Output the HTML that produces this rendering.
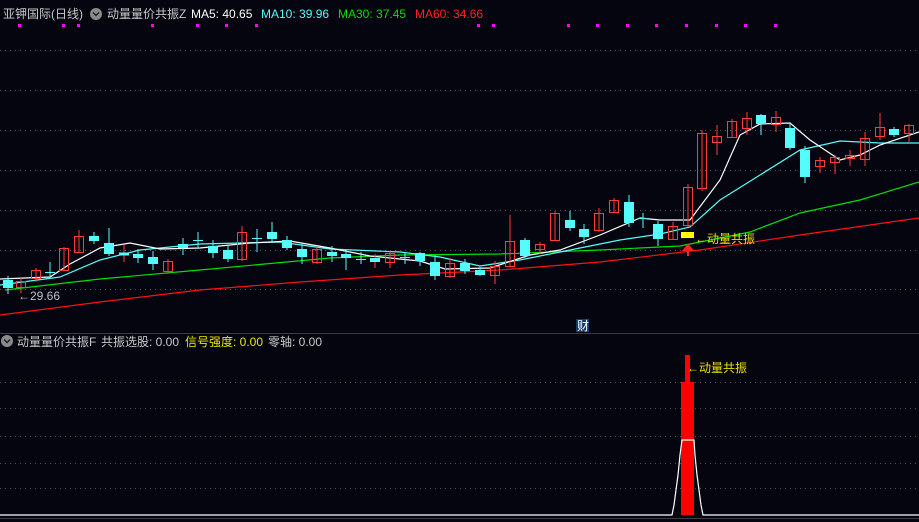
<!DOCTYPE html>
<html><head><meta charset="utf-8"><style>
html,body{margin:0;padding:0;background:#05050f;width:919px;height:522px;overflow:hidden}
svg{display:block}
text{font-family:"Liberation Sans","Noto Sans CJK SC",sans-serif;font-size:12px}
.r{fill:none;stroke:#ff3c3c;stroke-width:1}
.c{fill:#54fcfc;stroke:#54fcfc}
.wr{stroke:#ff3c3c}
.wc{stroke:#54fcfc}
.g{stroke:#555;stroke-dasharray:1 4;stroke-width:1}
</style></head><body>
<svg width="919" height="522" viewBox="0 0 919 522" xmlns="http://www.w3.org/2000/svg">
<rect width="919" height="522" fill="#05050f"/>
<!-- grid -->
<g class="g">
<line x1="0" y1="50.5" x2="919" y2="50.5"/><line x1="0" y1="90.5" x2="919" y2="90.5"/>
<line x1="0" y1="130.5" x2="919" y2="130.5"/><line x1="0" y1="170.5" x2="919" y2="170.5"/>
<line x1="0" y1="210.5" x2="919" y2="210.5"/><line x1="0" y1="250.5" x2="919" y2="250.5"/>
<line x1="0" y1="289.5" x2="919" y2="289.5"/>
<line x1="0" y1="382.5" x2="919" y2="382.5"/><line x1="0" y1="408.5" x2="919" y2="408.5"/>
<line x1="0" y1="436.5" x2="919" y2="436.5"/><line x1="0" y1="463.5" x2="919" y2="463.5"/>
<line x1="0" y1="488.5" x2="919" y2="488.5"/>
</g>
<line x1="0" y1="333.5" x2="919" y2="333.5" stroke="#3a3a44"/>
<!-- header -->
<text x="3" y="18" fill="#c8c8c8">亚钾国际(日线)</text>
<circle cx="96" cy="14" r="6" fill="#8a8a8a"/><path d="M93 12.5l3 3 3-3" stroke="#222" fill="none" stroke-width="1.5"/>
<text x="107" y="18" fill="#c8c8c8">动量量价共振Z</text>
<text x="191" y="18" fill="#ffffff">MA5: 40.65</text>
<text x="261" y="18" fill="#54fcfc">MA10: 39.96</text>
<text x="338" y="18" fill="#00e000">MA30: 37.45</text>
<text x="415" y="18" fill="#ff2020">MA60: 34.66</text>
<g fill="#ff00ff">
<rect x="18" y="24" width="3" height="3"/><rect x="62" y="24" width="3" height="3"/><rect x="77" y="24" width="3" height="3"/>
<rect x="151" y="24" width="3" height="3"/><rect x="196" y="24" width="3" height="3"/><rect x="225" y="24" width="3" height="3"/>
<rect x="255" y="24" width="3" height="3"/><rect x="477" y="24" width="3" height="3"/><rect x="492" y="24" width="3" height="3"/>
<rect x="567" y="24" width="3" height="3"/><rect x="596" y="24" width="3" height="3"/><rect x="626" y="24" width="3" height="3"/>
<rect x="655" y="24" width="3" height="3"/><rect x="685" y="24" width="3" height="3"/><rect x="715" y="24" width="3" height="3"/>
<rect x="744" y="24" width="3" height="3"/><rect x="774" y="24" width="3" height="3"/>
</g>
<!-- MA lines -->
<polyline fill="none" stroke="#ff1010" stroke-width="1.2" points="0,315 100,302 200,290 300,282 400,275 500,270 600,262 700,250 800,235 919,218"/>
<polyline fill="none" stroke="#00e000" stroke-width="1.2" points="5,290 100,279 200,270 330,258 400,255 500,254 600,250 680,246 750,232 800,213 860,200 919,182"/>
<polyline fill="none" stroke="#54fcfc" stroke-width="1.2" points="0,285 60,277 100,260 140,250 200,244 280,242 330,249 400,252 440,257 480,266 520,260 560,252 620,240 660,234 690,227 720,200 760,175 800,150 840,141 880,143 919,143"/>
<polyline fill="none" stroke="#ffffff" stroke-width="1.2" points="0,279 50,277 70,264 100,248 130,243 160,249 200,248 250,243 290,241 330,248 370,256 420,261 445,269 490,268 530,255 560,250 600,235 640,218 660,220 690,220 720,180 740,135 760,124 790,123 810,140 840,160 860,155 880,145 919,132"/>
<!-- candles -->
<g stroke-width="1">
<line class="wc" x1="8" y1="276" x2="8" y2="294"/><rect class="c" x="3.5" y="280.5" width="9" height="7"/>
<line class="wr" x1="21" y1="278" x2="21" y2="293"/><rect class="r" x="16.5" y="281.5" width="9" height="6"/>
<line class="wr" x1="36" y1="268" x2="36" y2="282"/><rect class="r" x="31.5" y="270.5" width="9" height="8"/>
<line class="wc" x1="50" y1="262" x2="50" y2="278"/><line class="wc" x1="45" y1="272.5" x2="55" y2="272.5"/>
<line class="wr" x1="64" y1="247" x2="64" y2="271"/><rect class="r" x="59.5" y="248.5" width="9" height="22"/>
<line class="wr" x1="79" y1="230" x2="79" y2="253"/><rect class="r" x="74.5" y="236.5" width="9" height="16"/>
<line class="wc" x1="94" y1="232" x2="94" y2="244"/><rect class="c" x="89.5" y="236.5" width="9" height="4"/>
<line class="wc" x1="109" y1="228" x2="109" y2="256"/><rect class="c" x="104.5" y="243.5" width="9" height="10"/>
<line class="wr" x1="124" y1="245" x2="124" y2="262"/><rect class="c" x="119.5" y="253" width="9" height="2" fill="#ff3c3c" stroke="#ff3c3c"/>
<line class="wc" x1="138" y1="249" x2="138" y2="263"/><rect class="c" x="133.5" y="254.5" width="9" height="3"/>
<line class="wc" x1="153" y1="251" x2="153" y2="270"/><rect class="c" x="148.5" y="257.5" width="9" height="6"/>
<line class="wr" x1="168" y1="259" x2="168" y2="274"/><rect class="r" x="163.5" y="261.5" width="9" height="10"/>
<line class="wc" x1="183" y1="238" x2="183" y2="255"/><rect class="c" x="178.5" y="244.5" width="9" height="3"/>
<line class="wc" x1="198" y1="232" x2="198" y2="248"/><line class="wc" x1="193" y1="240.5" x2="203" y2="240.5"/>
<line class="wc" x1="213" y1="240" x2="213" y2="258"/><rect class="c" x="208.5" y="246.5" width="9" height="6"/>
<line class="wc" x1="228" y1="246" x2="228" y2="262"/><rect class="c" x="223.5" y="250.5" width="9" height="8"/>
<line class="wr" x1="242" y1="226" x2="242" y2="261"/><rect class="r" x="237.5" y="232.5" width="9" height="27"/>
<line class="wc" x1="257" y1="229" x2="257" y2="252"/><line class="wc" x1="252" y1="238.5" x2="262" y2="238.5"/>
<line class="wc" x1="272" y1="222" x2="272" y2="243"/><rect class="c" x="267.5" y="232.5" width="9" height="6"/>
<line class="wc" x1="287" y1="236" x2="287" y2="250"/><rect class="c" x="282.5" y="240.5" width="9" height="7"/>
<line class="wc" x1="302" y1="244" x2="302" y2="264"/><rect class="c" x="297.5" y="249.5" width="9" height="7"/>
<line class="wr" x1="317" y1="246" x2="317" y2="264"/><rect class="r" x="312.5" y="249.5" width="9" height="13"/>
<line class="wc" x1="332" y1="246" x2="332" y2="262"/><rect class="c" x="327.5" y="252.5" width="9" height="3"/>
<line class="wc" x1="346" y1="250" x2="346" y2="270"/><rect class="c" x="341.5" y="254.5" width="9" height="3"/>
<line class="wc" x1="361" y1="252" x2="361" y2="264"/><line class="wc" x1="356" y1="259.5" x2="366" y2="259.5"/>
<line class="wr" x1="375" y1="254" x2="375" y2="268"/><rect class="c" x="370.5" y="258.5" width="9" height="3" fill="#ff3c3c" stroke="#ff3c3c"/>
<line class="wr" x1="390" y1="251" x2="390" y2="268"/><rect class="r" x="385.5" y="253.5" width="9" height="9"/>
<line class="wc" x1="405" y1="252" x2="405" y2="264"/><line class="wc" x1="400" y1="257.5" x2="410" y2="257.5"/>
<line class="wc" x1="420" y1="252" x2="420" y2="266"/><rect class="c" x="415.5" y="253.5" width="9" height="7"/>
<line class="wc" x1="435" y1="255" x2="435" y2="280"/><rect class="c" x="430.5" y="262.5" width="9" height="13"/>
<line class="wr" x1="450" y1="258" x2="450" y2="278"/><rect class="r" x="445.5" y="263.5" width="9" height="13"/>
<line class="wc" x1="465" y1="259" x2="465" y2="274"/><rect class="c" x="460.5" y="263.5" width="9" height="7"/>
<line class="wc" x1="480" y1="267" x2="480" y2="276"/><rect class="c" x="475.5" y="270.5" width="9" height="4"/>
<line class="wr" x1="495" y1="261" x2="495" y2="284"/><rect class="r" x="490.5" y="266.5" width="9" height="9"/>
<line class="wr" x1="510" y1="215" x2="510" y2="267"/><rect class="r" x="505.5" y="241.5" width="9" height="25"/>
<line class="wc" x1="525" y1="238" x2="525" y2="258"/><rect class="c" x="520.5" y="240.5" width="9" height="15"/>
<line class="wr" x1="540" y1="242" x2="540" y2="254"/><rect class="r" x="535.5" y="244.5" width="9" height="5"/>
<line class="wr" x1="555" y1="211" x2="555" y2="241"/><rect class="r" x="550.5" y="213.5" width="9" height="27"/>
<line class="wc" x1="570" y1="211" x2="570" y2="231"/><rect class="c" x="565.5" y="220.5" width="9" height="7"/>
<line class="wc" x1="584" y1="224" x2="584" y2="244"/><rect class="c" x="579.5" y="229.5" width="9" height="7"/>
<line class="wr" x1="599" y1="208" x2="599" y2="232"/><rect class="r" x="594.5" y="213.5" width="9" height="17"/>
<line class="wr" x1="614" y1="198" x2="614" y2="213"/><rect class="r" x="609.5" y="200.5" width="9" height="12"/>
<line class="wc" x1="629" y1="195" x2="629" y2="227"/><rect class="c" x="624.5" y="202.5" width="9" height="20"/>
<line class="wc" x1="643" y1="213" x2="643" y2="228"/><line class="wc" x1="638" y1="218.5" x2="648" y2="218.5"/>
<line class="wc" x1="658" y1="221" x2="658" y2="246"/><rect class="c" x="653.5" y="224.5" width="9" height="14"/>
<line class="wr" x1="673" y1="222" x2="673" y2="240"/><rect class="r" x="668.5" y="226.5" width="9" height="13"/>
<line class="wr" x1="688" y1="184" x2="688" y2="227"/><rect class="r" x="683.5" y="187.5" width="9" height="38"/>
<line class="wr" x1="702" y1="130" x2="702" y2="191"/><rect class="r" x="697.5" y="133.5" width="9" height="55"/>
<line class="wr" x1="717" y1="125" x2="717" y2="155"/><rect class="r" x="712.5" y="136.5" width="9" height="6"/>
<line class="wr" x1="732" y1="119" x2="732" y2="138"/><rect class="r" x="727.5" y="121.5" width="9" height="16"/>
<line class="wr" x1="747" y1="112" x2="747" y2="135"/><rect class="r" x="742.5" y="118.5" width="9" height="10"/>
<line class="wc" x1="761" y1="114" x2="761" y2="135"/><rect class="c" x="756.5" y="115.5" width="9" height="8"/>
<line class="wr" x1="776" y1="111" x2="776" y2="132"/><rect class="r" x="771.5" y="117.5" width="9" height="7"/>
<line class="wc" x1="790" y1="123" x2="790" y2="150"/><rect class="c" x="785.5" y="128.5" width="9" height="19"/>
<line class="wc" x1="805" y1="146" x2="805" y2="183"/><rect class="c" x="800.5" y="150.5" width="9" height="26"/>
<line class="wr" x1="820" y1="157" x2="820" y2="173"/><rect class="r" x="815.5" y="160.5" width="9" height="6"/>
<line class="wr" x1="835" y1="155" x2="835" y2="174"/><rect class="r" x="830.5" y="157.5" width="9" height="5"/>
<line class="wr" x1="850" y1="150" x2="850" y2="166"/><rect class="r" x="845.5" y="155.5" width="9" height="3"/>
<line class="wr" x1="865" y1="132" x2="865" y2="166"/><rect class="r" x="860.5" y="138.5" width="9" height="21"/>
<line class="wr" x1="880" y1="113" x2="880" y2="140"/><rect class="r" x="875.5" y="127.5" width="9" height="9"/>
<line class="wc" x1="894" y1="127" x2="894" y2="137"/><rect class="c" x="889.5" y="129.5" width="9" height="5"/>
<line class="wr" x1="909" y1="124" x2="909" y2="142"/><rect class="r" x="904.5" y="125.5" width="9" height="8"/>
</g>
<!-- annotations -->
<text x="18" y="300" fill="#c0c0c0">←29.66</text>
<rect x="681" y="232" width="13" height="6" fill="#ffff00"/>
<text x="695" y="243" fill="#e8e000">←动量共振</text>
<path d="M688 256V249M684 250l4-5 4 5z" stroke="#ff2020" fill="#ff2020" stroke-width="2"/>
<rect x="576" y="319" width="13" height="13" fill="#163a6a"/>
<text x="577" y="330" fill="#ffffff" font-size="11">财</text>
<!-- lower panel -->
<circle cx="7" cy="341" r="6" fill="#8a8a8a"/><path d="M4 339.5l3 3 3-3" stroke="#222" fill="none" stroke-width="1.5"/>
<text x="17" y="346" fill="#c8c8c8">动量量价共振F</text>
<text x="101" y="346" fill="#c8c8c8">共振选股: 0.00</text>
<text x="185" y="346" fill="#e8e800">信号强度: 0.00</text>
<text x="268" y="346" fill="#c8c8c8">零轴: 0.00</text>
<rect x="681" y="382" width="13" height="133" fill="#ff0000"/>
<rect x="685" y="355" width="5" height="28" fill="#ff0000"/>
<polyline fill="none" stroke="#ffffff" stroke-width="1.2" points="0,515 672,515 674,505 676,490 678,475 680,455 682,440 686,440 688,440 694,440 695,455 697,475 699,490 701,505 703,515 919,515"/>
<text x="687" y="372" fill="#e8e000">←动量共振</text>
<line x1="0" y1="518.5" x2="919" y2="518.5" stroke="#3a3a44"/>
</svg>
</body></html>
